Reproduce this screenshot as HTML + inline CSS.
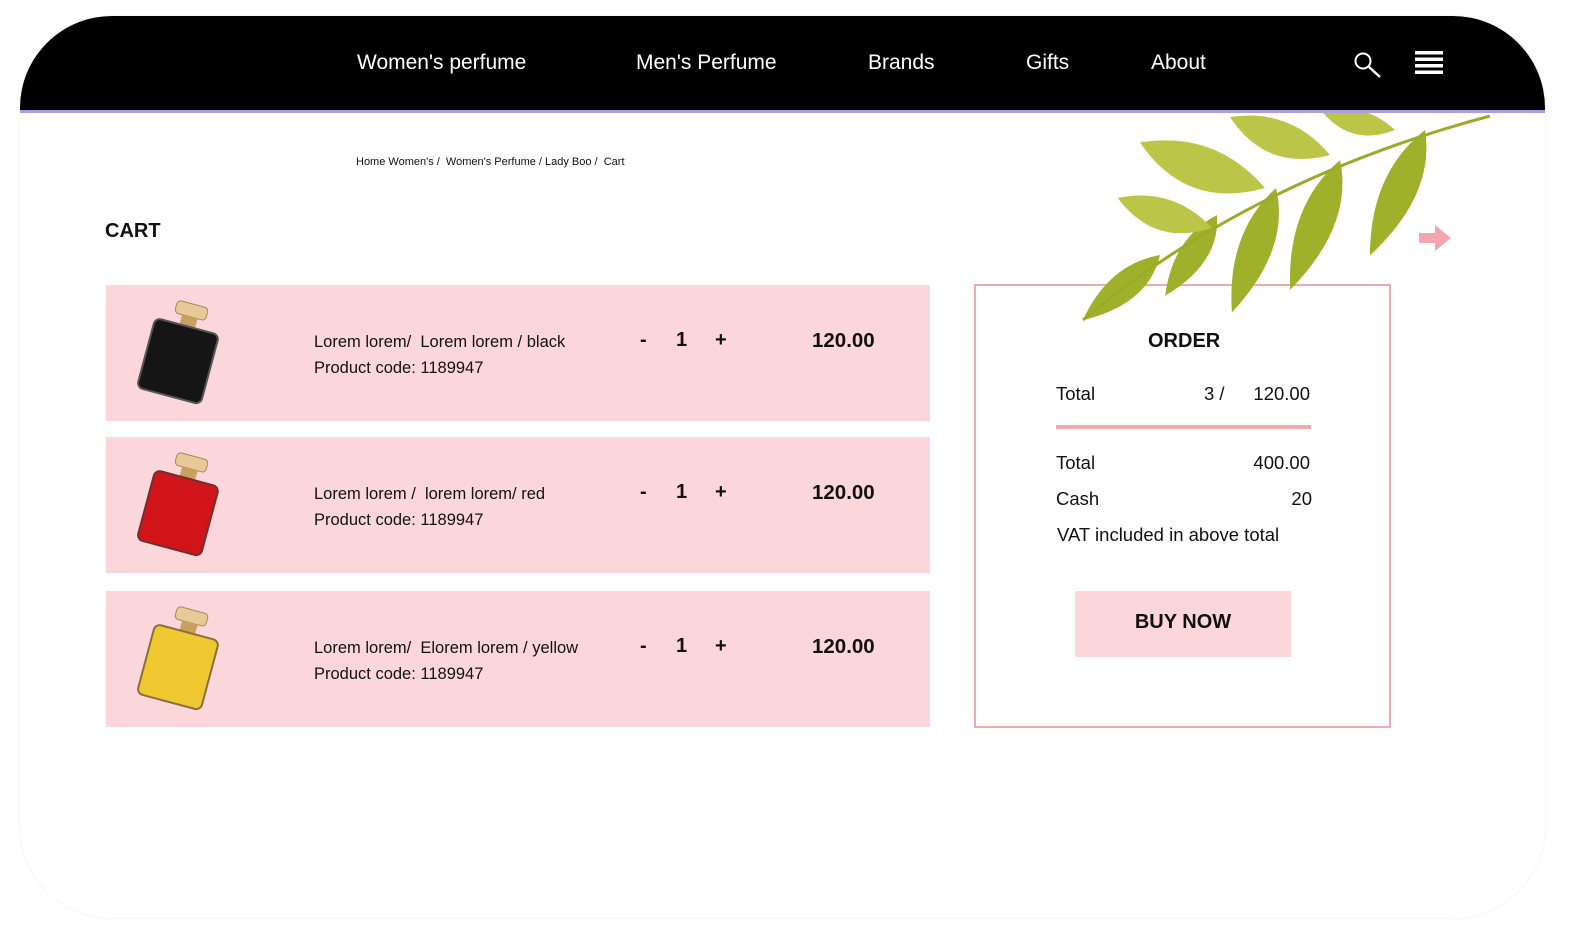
<!DOCTYPE html>
<html><head><meta charset="utf-8"><style>
*{margin:0;padding:0;box-sizing:border-box}
body{width:1581px;height:945px;background:#fff;position:relative;overflow:hidden;font-family:"Liberation Sans",sans-serif;color:#111}
.card{position:absolute;left:20px;top:16px;width:1525px;height:902px;border-radius:92px;overflow:hidden;background:#fff;box-shadow:0 0 2px rgba(240,200,200,.5)}
.hdr{position:absolute;left:0;top:0;width:1525px;height:97px;background:#000;border-bottom:3px solid #a99ee0;z-index:3}
.hdr .n{position:absolute;top:35px;color:#fff;font-size:21px}
.a{position:absolute;white-space:nowrap}
.row{position:absolute;left:106px;width:824px;height:136px;background:#fbd7dc}
.row .d{position:absolute;left:208px;top:44px;font-size:16.5px;line-height:26px}
.row .q{position:absolute;top:44px;font-size:20px;font-weight:bold}
.row .p{position:absolute;left:706px;top:44px;font-size:20.5px;font-weight:bold}
.order{position:absolute;left:974px;top:284px;width:417px;height:444px;border:2px solid #eeaaae}
.order .a{font-size:18.5px}
</style></head><body>
<div class="card">
 <div class="hdr">
  <span class="n" style="left:337px">Women's perfume</span>
  <span class="n" style="left:616px">Men's Perfume</span>
  <span class="n" style="left:848px">Brands</span>
  <span class="n" style="left:1006px">Gifts</span>
  <span class="n" style="left:1131px">About</span>
  <svg style="position:absolute;left:1333px;top:35px" width="32" height="30" viewBox="0 0 32 30"><circle cx="10" cy="10" r="7.5" fill="none" stroke="#fff" stroke-width="2"/><path d="M15.5 15.5 L27 26" stroke="#fff" stroke-width="2.5"/></svg>
  <svg style="position:absolute;left:1395px;top:34px" width="29" height="28" viewBox="0 0 29 28"><g fill="#fff"><rect x="0" y="1" width="28" height="3.5"/><rect x="0" y="7.5" width="28" height="3.5"/><rect x="0" y="14" width="28" height="3.5"/><rect x="0" y="20.5" width="28" height="3.5"/></g></svg>
 </div>
</div>
<svg style="position:absolute;left:0;top:0;z-index:1" width="1581" height="945">
 <g fill="#9fb02a">
  <path d="M0 0 Q40 -30 100 0 Q45 26 0 0" transform="translate(1217 215) rotate(122.7) scale(0.96)"/>
  <path d="M0 0 Q40 -26 100 0 Q45 24 0 0" transform="translate(1276 188) rotate(109.5) scale(1.32)"/>
  <path d="M0 0 Q40 -26 100 0 Q45 24 0 0" transform="translate(1340 160) rotate(111) scale(1.39)"/>
  <path d="M0 0 Q40 -26 100 0 Q45 24 0 0" transform="translate(1425 130) rotate(113.7) scale(1.37)"/>
  <path d="M0 0 Q40 -30 100 0 Q45 26 0 0" transform="translate(1160 255) rotate(139.8) scale(1.01)"/>
 </g>
 <g fill="#bcc548">
  <path d="M0 0 Q50 -36 100 0 Q50 28 0 0" transform="translate(1212 228) rotate(197.7) scale(0.99)"/>
  <path d="M0 0 Q50 -36 100 0 Q50 28 0 0" transform="translate(1265 188) rotate(200) scale(1.33)"/>
  <path d="M0 0 Q50 -36 100 0 Q50 28 0 0" transform="translate(1330 155) rotate(200.8) scale(1.07)"/>
  <path d="M0 0 Q50 -36 100 0 Q50 28 0 0" transform="translate(1395 130) rotate(194) scale(0.75)"/>
 </g>
 <path d="M1083 320 Q1250 180 1490 116" fill="none" stroke="#9aab2a" stroke-width="3"/>
 <path d="M1419 233 h16 v-8 l16 13 l-16 13 v-8 h-16z" fill="#f4a6b0"/>
</svg>
<div class="a" style="left:356px;top:156px;font-size:11px">Home Women's /&nbsp; Women's Perfume / Lady Boo /&nbsp; Cart</div>
<div class="a" style="left:105px;top:220px;font-size:20px;font-weight:bold">CART</div>

<div class="row" style="top:285px">
 <svg style="position:absolute;left:22px;top:12px" width="100" height="110" viewBox="0 0 100 110"><g transform="rotate(15 50 60)"><rect x="35" y="5" width="32" height="13" rx="4" fill="#e8c99a" stroke="#b08850"/><rect x="43" y="18" width="16" height="10" fill="#c9a060"/><rect x="18" y="28" width="66" height="72" rx="6" fill="#151515" stroke="#555" stroke-width="2"/></g></svg>
 <div class="d">Lorem lorem/&nbsp; Lorem lorem / black<br>Product code: 1189947</div>
 <span class="q" style="left:534px">-</span><span class="q" style="left:570px">1</span><span class="q" style="left:609px">+</span>
 <span class="p">120.00</span>
</div>
<div class="row" style="top:437px">
 <svg style="position:absolute;left:22px;top:12px" width="100" height="110" viewBox="0 0 100 110"><g transform="rotate(15 50 60)"><rect x="35" y="5" width="32" height="13" rx="4" fill="#e8c99a" stroke="#b08850"/><rect x="43" y="18" width="16" height="10" fill="#c9a060"/><rect x="18" y="28" width="66" height="72" rx="6" fill="#d0141a" stroke="#703030" stroke-width="2"/></g></svg>
 <div class="d">Lorem lorem /&nbsp; lorem lorem/ red<br>Product code: 1189947</div>
 <span class="q" style="left:534px">-</span><span class="q" style="left:570px">1</span><span class="q" style="left:609px">+</span>
 <span class="p">120.00</span>
</div>
<div class="row" style="top:591px">
 <svg style="position:absolute;left:22px;top:12px" width="100" height="110" viewBox="0 0 100 110"><g transform="rotate(15 50 60)"><rect x="35" y="5" width="32" height="13" rx="4" fill="#e8c99a" stroke="#b08850"/><rect x="43" y="18" width="16" height="10" fill="#c9a060"/><rect x="18" y="28" width="66" height="72" rx="6" fill="#f0c830" stroke="#8a7040" stroke-width="2"/></g></svg>
 <div class="d">Lorem lorem/&nbsp; Elorem lorem / yellow<br>Product code: 1189947</div>
 <span class="q" style="left:534px">-</span><span class="q" style="left:570px">1</span><span class="q" style="left:609px">+</span>
 <span class="p">120.00</span>
</div>

<div class="order">
 <div class="a" style="left:172px;top:44px;font-size:20px;font-weight:bold">ORDER</div>
 <div class="a" style="left:80px;top:97px">Total</div>
 <div class="a" style="left:228px;top:97px">3 /</div>
 <div class="a" style="right:79px;top:97px">120.00</div>
 <div style="position:absolute;left:80px;top:139px;width:255px;height:4px;background:#eeaaae"></div>
 <div class="a" style="left:80px;top:166px">Total</div>
 <div class="a" style="right:79px;top:166px">400.00</div>
 <div class="a" style="left:80px;top:202px">Cash</div>
 <div class="a" style="right:77px;top:202px">20</div>
 <div class="a" style="left:81px;top:238px">VAT included in above total</div>
 <div style="position:absolute;left:99px;top:305px;width:216px;height:66px;background:#fbd7dc;font-weight:bold;font-size:20px;text-align:center;line-height:62px">BUY NOW</div>
</div>
</body></html>
